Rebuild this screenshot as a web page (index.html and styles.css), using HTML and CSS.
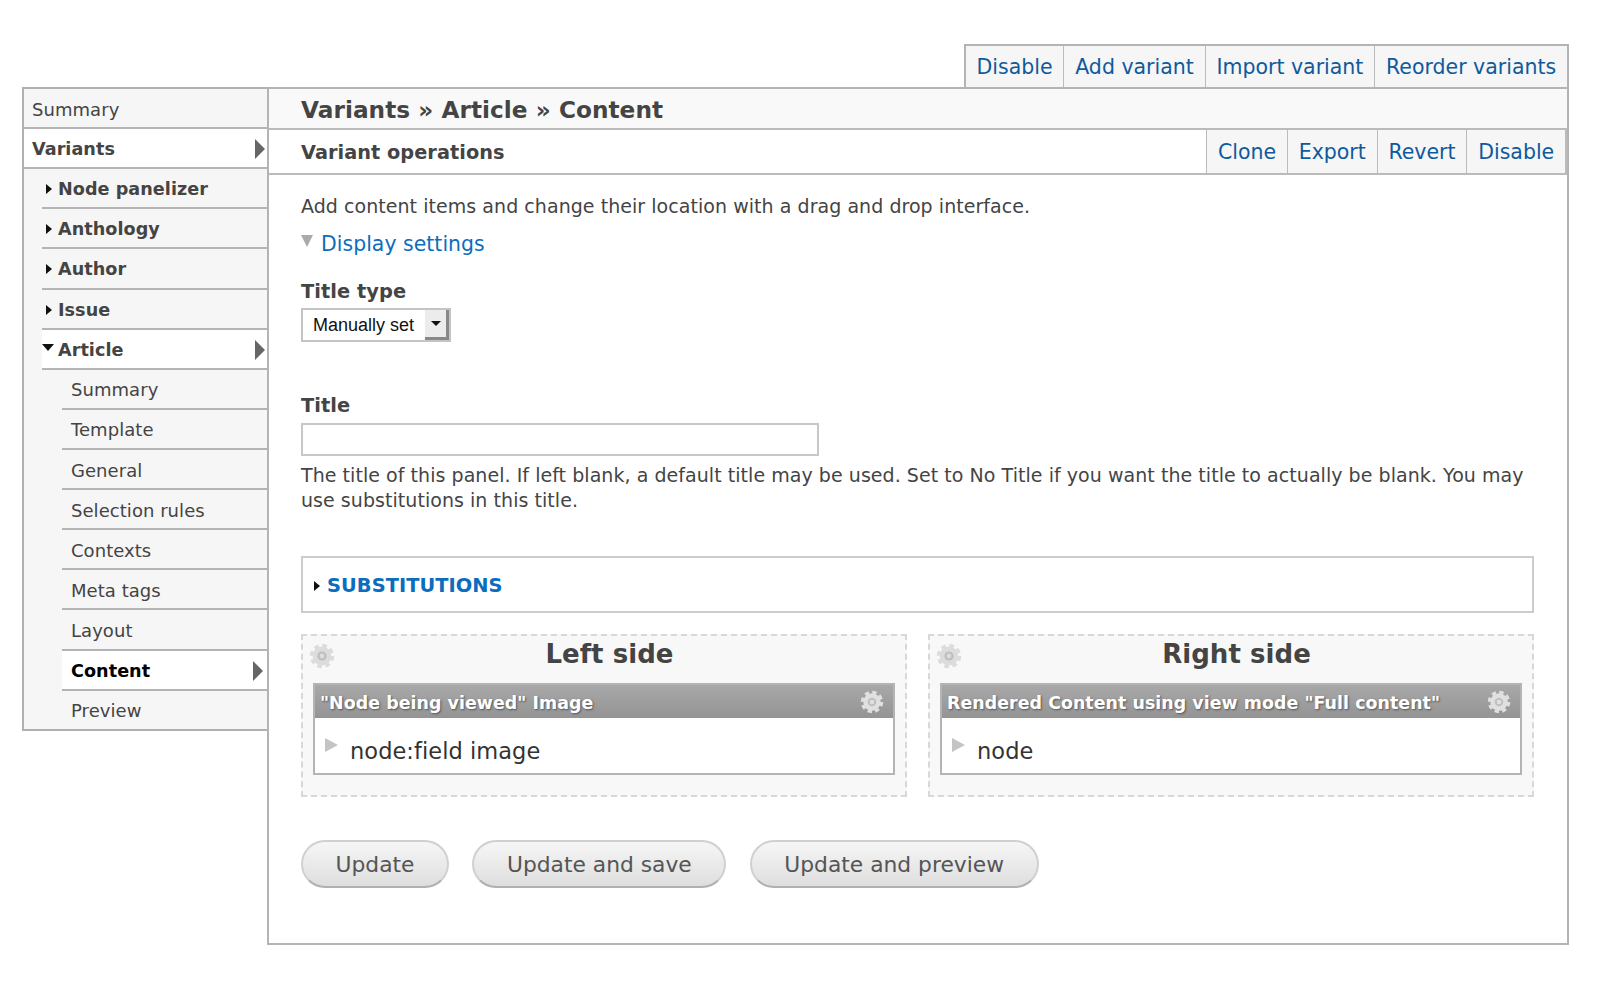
FILE: index.html
```html
<!DOCTYPE html>
<html lang="en">
<head>
<meta charset="utf-8">
<title>Variants » Article » Content</title>
<link rel="stylesheet" href="styles.css">
</head>
<body>
<svg class="defs" width="0" height="0" aria-hidden="true">
  <symbol id="gear" viewBox="0 0 26 26">
    <circle cx="13" cy="13" r="10.4" fill="none" stroke="currentColor" stroke-width="3.6" stroke-dasharray="4.6 3.57" stroke-linecap="butt"/>
    <circle cx="13" cy="13" r="9.4" fill="currentColor"/>
    <circle cx="13" cy="13" r="4.6" fill="#a6a6a6" fill-opacity=".55"/>
    <circle cx="13" cy="13" r="2.4" fill="currentColor"/>
  </symbol>
</svg>
<div class="page">
  <nav class="tabs top-tabs">
    <a>Disable</a><a>Add variant</a><a>Import variant</a><a>Reorder variants</a>
  </nav>
  <div class="frame">
    <aside class="side">
      <div class="row">Summary</div>
      <div class="row bold active">Variants<i class="pointer"></i></div>
      <div class="row l2 bold"><i class="caret"></i>Node panelizer</div>
      <div class="row l2 bold"><i class="caret"></i>Anthology</div>
      <div class="row l2 bold"><i class="caret"></i>Author</div>
      <div class="row l2 bold"><i class="caret"></i>Issue</div>
      <div class="row l2 bold active"><i class="caret open"></i>Article<i class="pointer"></i></div>
      <div class="row l3">Summary</div>
      <div class="row l3">Template</div>
      <div class="row l3">General</div>
      <div class="row l3">Selection rules</div>
      <div class="row l3">Contexts</div>
      <div class="row l3">Meta tags</div>
      <div class="row l3">Layout</div>
      <div class="row l3 bold active current">Content<i class="pointer"></i></div>
      <div class="row l3 last">Preview</div>
    </aside>
    <main class="main">
      <h1 class="crumb">Variants » Article » Content</h1>
      <div class="ops">
        <h2 class="ops-title">Variant operations</h2>
        <nav class="tabs ops-tabs"><a>Clone</a><a>Export</a><a>Revert</a><a>Disable</a></nav>
      </div>
      <div class="body">
        <p class="intro">Add content items and change their location with a drag and drop interface.</p>
        <a class="disclosure"><i class="tri-down"></i>Display settings</a>
        <label class="label type-label">Title type</label>
        <div class="select"><span class="select-text">Manually set</span><span class="select-btn"><i></i></span></div>
        <label class="label title-label">Title</label>
        <div class="input"></div>
        <p class="help">The title of this panel. If left blank, a default title may be used. Set to No Title if you want the title to actually be blank. You may use substitutions in this title.</p>
        <div class="subst"><i class="caret"></i><a>SUBSTITUTIONS</a></div>
        <div class="panels">
          <section class="region">
            <svg class="gear region-gear"><use href="#gear"/></svg>
            <h3 class="region-title">Left side</h3>
            <div class="pane">
              <div class="pane-head"><span>"Node being viewed" Image</span><svg class="gear head-gear"><use href="#gear"/></svg></div>
              <div class="pane-body"><i class="tri-right"></i>node:field image</div>
            </div>
          </section>
          <section class="region">
            <svg class="gear region-gear"><use href="#gear"/></svg>
            <h3 class="region-title">Right side</h3>
            <div class="pane">
              <div class="pane-head"><span>Rendered Content using view mode "Full content"</span><svg class="gear head-gear"><use href="#gear"/></svg></div>
              <div class="pane-body"><i class="tri-right"></i>node</div>
            </div>
          </section>
        </div>
        <div class="buttons">
          <button class="btn">Update</button>
          <button class="btn">Update and save</button>
          <button class="btn">Update and preview</button>
        </div>
      </div>
    </main>
  </div>
</div>
</body>
</html>
```
FILE: styles.css
```css
* { box-sizing: border-box; }
html, body { margin: 0; padding: 0; background: #fff; }
body { font-family: "DejaVu Sans", sans-serif; color: #444; font-size: 19px; letter-spacing: .05px; height: 990px; overflow: hidden; }
.defs { position: absolute; }
.page { padding: 44px 31px 0 22px; }

.tabs { display: flex; }
.tabs a { color: #0f5a9c; font-size: 20.5px; letter-spacing: 0; display: flex; align-items: center; padding: 0 10.8px; background: #f6f6f6; border-right: 1px solid #bbb; white-space: nowrap; }
.tabs a:last-child { border-right: 0; }

.top-tabs { width: max-content; margin-left: auto; height: 43px; border: 2px solid #b4b4b4; border-bottom: 0; }

.frame { display: flex; align-items: flex-start; }
.side { width: 245px; flex: none; background: #f6f6f6; border: 2px solid #b0b0b0; border-right: 0; }
.row { height: 40.12px; display: flex; align-items: center; padding-left: 8px; padding-top: 2px; border-bottom: 2px solid #b4b4b4; position: relative; font-size: 18px; white-space: nowrap; }
.row.last { border-bottom: 0; height: 38.5px; padding-top: 2px; }
.bold { font-weight: 700; }
.row.bold { font-size: 17.6px; }
.row.active { background: #fff; }
.l2 { margin-left: 18px; padding-left: 16px; }
.l3 { margin-left: 38px; padding-left: 9px; }
.current { color: #000; }
.caret { display: inline-block; border-left: 6px solid #111; border-top: 5.5px solid transparent; border-bottom: 5.5px solid transparent; }
.row .caret { position: absolute; left: 4px; top: 15px; }
.row .caret.open { left: 0; top: 14px; border-top: 7px solid #111; border-left: 6px solid transparent; border-right: 6px solid transparent; border-bottom: 0; }
.pointer { position: absolute; right: 2px; top: 10px; border-left: 10px solid #666; border-top: 10px solid transparent; border-bottom: 10px solid transparent; }
.current .pointer { right: 4px; }

.main { flex: 1; min-width: 0; border: 2px solid #b4b4b4; background: #fff; }
.crumb { margin: 0; height: 41px; padding: 2px 0 0 32px; display: flex; align-items: center; background: #f9f9f9; border-bottom: 2px solid #bbb; font-size: 23.2px; line-height: 1; color: #444; }
.ops { height: 45px; display: flex; align-items: stretch; justify-content: space-between; border-bottom: 2px solid #bbb; }
.ops-title { margin: 0; padding: 2px 0 0 32px; align-self: center; font-size: 19.3px; color: #444; }
.ops-tabs { border-right: 2px solid #bbb; border-left: 1px solid #bbb; }

.body { padding: 0 33px 55px 32px; }
.intro { margin: 0; padding-top: 19px; line-height: 24px; }
.disclosure { display: flex; align-items: center; color: #0b6dbd; font-size: 20.4px; margin-top: 13px; line-height: 26px; gap: 8px; }
.tri-down { border-top: 12px solid #aaa; border-left: 6px solid transparent; border-right: 6px solid transparent; margin-top: -6px; }
.label { display: block; font-weight: 700; font-size: 19.4px; line-height: 26px; }
.type-label { margin-top: 22px; }
.select { width: 150px; height: 34px; margin-top: 3px; border: 2px solid #c4c4c4; display: flex; align-items: center; justify-content: space-between; background: #fff; color: #111; font-family: "Liberation Sans", sans-serif; font-size: 18px; letter-spacing: 0; padding-left: 10px; }
.select-btn { width: 24px; height: 30px; background: #ececec; border-right: 3px solid #888; border-bottom: 3px solid #888; display: flex; align-items: center; justify-content: center; }
.select-btn i { border-top: 5px solid #111; border-left: 5px solid transparent; border-right: 5px solid transparent; }
.title-label { margin-top: 51px; }
.input { width: 518px; height: 33px; margin-top: 4px; border: 2px solid #c8c8c8; background: #fff; }
.help { margin: 7px 0 0; line-height: 25px; }

.subst { margin-top: 43px; height: 57px; border: 2px solid #ccc; display: flex; align-items: center; padding: 2px 0 0 11px; gap: 7px; font-weight: 700; font-size: 19.4px; color: #0b6dbd; }

.panels { display: flex; gap: 21px; margin-top: 21px; }
.region { flex: 1; height: 163px; background: #f8f8f8; border: 2px dashed #d8d8d8; position: relative; padding: 0 10px; }
.region-title { margin: 0; text-align: center; font-size: 26px; line-height: 36px; padding-left: 11px; height: 47px; color: #444; }
.gear { display: block; }
.region-gear { position: absolute; left: 6px; top: 7px; width: 26px; height: 26px; color: #dcdcdc; }
.pane { border: 2px solid #b4b4b4; background: #fff; height: 92px; }
.pane-head { height: 33px; background: linear-gradient(#a8a8a8, #949494); color: #fff; font-weight: 700; font-size: 17.4px; text-shadow: 1px 1px 2px #555; display: flex; align-items: center; justify-content: space-between; padding: 0 9px 0 5px; white-space: nowrap; }
.pane-head span { padding-top: 2px; }
.head-gear { width: 24px; height: 24px; color: #e0e0e0; }
.pane-body { display: flex; align-items: center; height: 57px; padding: 9px 0 0 35px; font-size: 22.5px; color: #333; position: relative; }
.tri-right { position: absolute; left: 10px; top: 20px; border-left: 13px solid #c4c4c4; border-top: 7px solid transparent; border-bottom: 7px solid transparent; }

.buttons { display: flex; gap: 23.5px; margin-top: 43px; }
.btn { font: inherit; font-size: 21.8px; height: 48px; padding: 0 32.5px; border-radius: 24px; border: 2px solid #d0d0d0; border-bottom-color: #b0b0b0; background: linear-gradient(#f6f6f6, #dedede); color: #555; white-space: nowrap; }
```
